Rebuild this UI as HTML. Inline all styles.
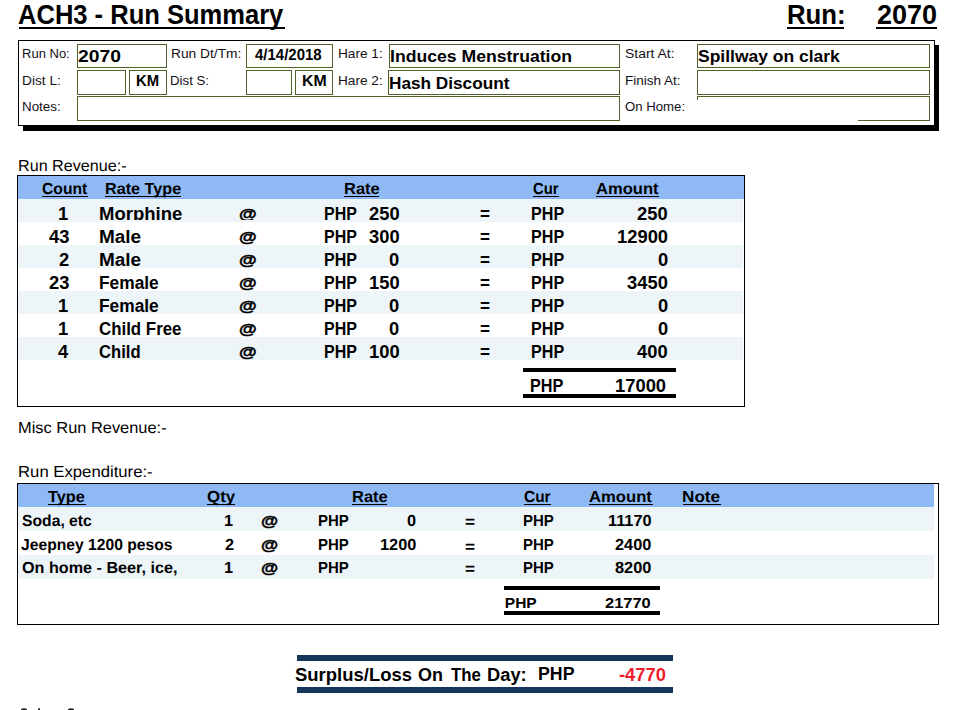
<!DOCTYPE html>
<html><head><meta charset="utf-8"><title>ACH3 - Run Summary</title><style>
html,body{margin:0;padding:0;background:#fff}
body{width:980px;height:710px;position:relative;overflow:hidden;font-family:"Liberation Sans",sans-serif}
.t{position:absolute;white-space:pre;line-height:30px;height:30px;transform-origin:0 0;color:#000;font-family:"Liberation Sans",sans-serif}
.b{font-weight:bold}
.bx{position:absolute;box-sizing:border-box;border:1px solid #4f6228;background:#fff}
.r{position:absolute;background:#000}
.row{position:absolute;left:0;width:980px;overflow:hidden}
</style></head><body>
<div class="r" style="left:23px;top:45px;width:916px;height:86px"></div>
<div style="position:absolute;left:18px;top:40px;width:917px;height:86px;box-sizing:border-box;border:1px solid #000;background:#fff"></div>
<div class="bx" style="left:77px;top:44px;width:90px;height:24px"></div>
<div class="bx" style="left:77px;top:70px;width:49px;height:25px"></div>
<div class="bx" style="left:129px;top:70px;width:38px;height:25px"></div>
<div class="bx" style="left:77px;top:96px;width:543px;height:25px"></div>
<div class="bx" style="left:246px;top:44px;width:87px;height:24px"></div>
<div class="bx" style="left:246px;top:70px;width:46px;height:25px"></div>
<div class="bx" style="left:295px;top:70px;width:38px;height:25px"></div>
<div class="bx" style="left:389px;top:44px;width:231px;height:24px"></div>
<div class="bx" style="left:388px;top:70px;width:232px;height:25px"></div>
<div class="bx" style="left:697px;top:44px;width:233px;height:24px"></div>
<div class="bx" style="left:697px;top:70px;width:233px;height:25px"></div>
<div class="r" style="left:697px;top:96px;width:233px;height:1px;background:#4f6228"></div>
<div class="r" style="left:929px;top:96px;width:1px;height:25px;background:#4f6228"></div>
<div class="r" style="left:858px;top:120px;width:72px;height:1px;background:#4f6228"></div>
<div class="r" style="left:697px;top:96px;width:1px;height:4px;background:#4f6228"></div>
<div class="r" style="left:19px;top:27px;width:266px;height:2px"></div>
<div class="r" style="left:787px;top:27px;width:57px;height:2px"></div>
<div class="r" style="left:876px;top:27px;width:61px;height:2px"></div>
<div style="position:absolute;left:17px;top:175px;width:728px;height:232px;box-sizing:border-box;border:1px solid #000;background:#fff"></div>
<div class="r" style="left:18px;top:176px;width:726px;height:23px;background:#8eb9f5"></div>
<div class="r" style="left:18px;top:199px;width:725px;height:23px;background:#edf5f9"></div>
<div class="r" style="left:18px;top:245px;width:725px;height:23px;background:#edf5f9"></div>
<div class="r" style="left:18px;top:291px;width:725px;height:23px;background:#edf5f9"></div>
<div class="r" style="left:18px;top:337px;width:725px;height:23px;background:#edf5f9"></div>
<div class="r" style="left:523px;top:368px;width:153px;height:4px"></div>
<div class="r" style="left:523px;top:394px;width:153px;height:4px"></div>
<div style="position:absolute;left:17px;top:483px;width:922px;height:142px;box-sizing:border-box;border:1px solid #000;background:#fff"></div>
<div class="r" style="left:18px;top:484px;width:916px;height:23px;background:#8eb9f5"></div>
<div class="r" style="left:18px;top:507px;width:916px;height:24px;background:#edf5f9"></div>
<div class="r" style="left:18px;top:555px;width:916px;height:24px;background:#edf5f9"></div>
<div class="r" style="left:504px;top:586px;width:156px;height:4px"></div>
<div class="r" style="left:504px;top:611px;width:156px;height:4px"></div>
<div class="r" style="left:297px;top:655px;width:376px;height:6px;background:#17365d"></div>
<div class="r" style="left:297px;top:687px;width:376px;height:6px;background:#17365d"></div>
<div class="r" style="left:41.9px;top:196px;width:46.1px;height:1px"></div>
<div class="r" style="left:104.8px;top:196px;width:76.4px;height:1px"></div>
<div class="r" style="left:343.8px;top:196px;width:35.6px;height:1px"></div>
<div class="r" style="left:532.5px;top:196px;width:26.2px;height:1px"></div>
<div class="r" style="left:596.3px;top:196px;width:63.2px;height:1px"></div>
<div class="r" style="left:47.5px;top:504px;width:38.2px;height:1px"></div>
<div class="r" style="left:207.0px;top:504px;width:28.4px;height:1px"></div>
<div class="r" style="left:351.8px;top:504px;width:35.6px;height:1px"></div>
<div class="r" style="left:524.3px;top:504px;width:27.2px;height:1px"></div>
<div class="r" style="left:589.3px;top:504px;width:63.4px;height:1px"></div>
<div class="r" style="left:682.5px;top:504px;width:38.2px;height:1px"></div>
<div class="r" style="left:21px;top:709px;width:6px;height:1px;background:#222"></div>
<div class="r" style="left:22px;top:708px;width:4px;height:1px;background:#777"></div>
<div class="r" style="left:38px;top:709px;width:2px;height:1px;background:#222"></div>
<div class="r" style="left:38px;top:708px;width:2px;height:1px;background:#777"></div>
<div class="r" style="left:68px;top:709px;width:6px;height:1px;background:#222"></div>
<div class="r" style="left:69px;top:708px;width:4px;height:1px;background:#777"></div>
<span class="t b" style="left:18.23px;top:0.00px;font-size:27.5px;transform:scaleX(0.9285);">ACH3 - Run Summary</span>
<span class="t b" style="left:786.92px;top:0.00px;font-size:27.5px;transform:scaleX(0.9353);">Run:</span>
<span class="t b" style="left:876.64px;top:0.00px;font-size:27.5px;transform:scaleX(0.9828);">2070</span>
<span class="t" style="left:21.80px;top:39.00px;font-size:12.5px;transform:scaleX(1.0409);color:#161016;">Run No:</span>
<span class="t" style="left:21.75px;top:66.00px;font-size:12.5px;transform:scaleX(1.0968);color:#161016;">Dist L:</span>
<span class="t" style="left:21.78px;top:92.00px;font-size:12.5px;transform:scaleX(1.0712);color:#161016;">Notes:</span>
<span class="t" style="left:170.50px;top:39.00px;font-size:12.5px;transform:scaleX(1.1014);color:#161016;">Run Dt/Tm:</span>
<span class="t" style="left:169.78px;top:66.00px;font-size:12.5px;transform:scaleX(1.0610);color:#161016;">Dist S:</span>
<span class="t" style="left:337.51px;top:39.00px;font-size:12.5px;transform:scaleX(1.0908);color:#161016;">Hare 1:</span>
<span class="t" style="left:337.51px;top:66.00px;font-size:12.5px;transform:scaleX(1.0908);color:#161016;">Hare 2:</span>
<span class="t" style="left:624.82px;top:39.00px;font-size:12.5px;transform:scaleX(1.1154);color:#161016;">Start At:</span>
<span class="t" style="left:624.77px;top:66.00px;font-size:12.5px;transform:scaleX(1.0807);color:#161016;">Finish At:</span>
<span class="t" style="left:625.08px;top:92.00px;font-size:12.5px;transform:scaleX(1.0546);color:#161016;">On Home:</span>
<span class="t b" style="left:78.29px;top:41.00px;font-size:16.5px;transform:scaleX(1.1677);">2070</span>
<span class="t b" style="left:389.75px;top:41.00px;font-size:16.5px;transform:scaleX(1.0675);">Induces Menstruation</span>
<span class="t b" style="left:389.03px;top:68.00px;font-size:16.5px;transform:scaleX(1.0425);">Hash Discount</span>
<span class="t b" style="left:697.99px;top:41.00px;font-size:16.5px;transform:scaleX(1.0593);">Spillway on clark</span>
<span class="t b" style="left:255.03px;top:40.00px;font-size:16px;transform:scaleX(0.9358) skewX(0.05deg);">4/14/2018</span>
<span class="t b" style="left:135.90px;top:66.00px;font-size:16px;transform:scaleX(0.9286) skewX(0.05deg);">KM</span>
<span class="t b" style="left:301.50px;top:66.00px;font-size:16px;transform:scaleX(0.9891) skewX(0.05deg);">KM</span>
<span class="t" style="left:18.27px;top:151.00px;font-size:16px;transform:scaleX(1.0084) skewX(0.05deg);">Run Revenue:-</span>
<span class="t" style="left:18.26px;top:413.00px;font-size:16px;transform:scaleX(1.0253) skewX(0.05deg);">Misc Run Revenue:-</span>
<span class="t" style="left:18.24px;top:457.00px;font-size:16px;transform:scaleX(1.0442) skewX(0.05deg);">Run Expenditure:-</span>
<span class="t b" style="left:41.93px;top:174.00px;font-size:16px;transform:scaleX(0.9809) skewX(0.05deg);">Count</span>
<span class="t b" style="left:104.58px;top:174.00px;font-size:16px;transform:scaleX(1.0113) skewX(0.05deg);">Rate Type</span>
<span class="t b" style="left:343.56px;top:174.00px;font-size:16px;transform:scaleX(1.0285) skewX(0.05deg);">Rate</span>
<span class="t b" style="left:532.62px;top:174.00px;font-size:16px;transform:scaleX(0.9287) skewX(0.05deg);">Cur</span>
<span class="t b" style="left:596.35px;top:174.00px;font-size:16px;transform:scaleX(1.0356) skewX(0.05deg);">Amount</span>
<span class="t b" style="left:529.88px;top:371.00px;font-size:18px;transform:scaleX(0.9018);">PHP</span>
<span class="t b" style="left:615.40px;top:371.00px;font-size:18px;transform:scaleX(1.0200);">17000</span>
<span class="t b" style="left:48.31px;top:482.00px;font-size:16px;transform:scaleX(1.0185) skewX(0.05deg);">Type</span>
<span class="t b" style="left:206.98px;top:482.00px;font-size:16px;transform:scaleX(1.0534) skewX(0.05deg);">Qty</span>
<span class="t b" style="left:351.56px;top:482.00px;font-size:16px;transform:scaleX(1.0285) skewX(0.05deg);">Rate</span>
<span class="t b" style="left:524.34px;top:482.00px;font-size:16px;transform:scaleX(0.9662) skewX(0.05deg);">Cur</span>
<span class="t b" style="left:589.35px;top:482.00px;font-size:16px;transform:scaleX(1.0398) skewX(0.05deg);">Amount</span>
<span class="t b" style="left:682.27px;top:482.00px;font-size:16px;transform:scaleX(1.0714) skewX(0.05deg);">Note</span>
<span class="t b" style="left:21.85px;top:506.00px;font-size:16px;transform:scaleX(0.9808) skewX(0.05deg);">Soda, etc</span>
<span class="t b" style="left:224.41px;top:506.00px;font-size:16px;transform:scaleX(1.0200) skewX(0.05deg);">1</span>
<span class="t b" style="left:261.41px;top:504.32px;font-size:14px;transform:scale(1.2538,1.1083);-webkit-text-stroke:0.45px #000;">@</span>
<span class="t b" style="left:317.89px;top:506.00px;font-size:16px;transform:scaleX(0.9362) skewX(0.05deg);">PHP</span>
<span class="t b" style="left:407.25px;top:506.00px;font-size:16px;transform:scaleX(1.0200) skewX(0.05deg);">0</span>
<span class="t b" style="left:464.77px;top:507.00px;font-size:16px;transform:scaleX(1.0770) skewX(0.05deg);">=</span>
<span class="t b" style="left:522.89px;top:506.00px;font-size:16px;transform:scaleX(0.9362) skewX(0.05deg);">PHP</span>
<span class="t b" style="left:607.76px;top:506.00px;font-size:16px;transform:scaleX(1.0200) skewX(0.05deg);">11170</span>
<span class="t b" style="left:21.41px;top:530.00px;font-size:16px;transform:scaleX(0.9790) skewX(0.05deg);">Jeepney 1200 pesos</span>
<span class="t b" style="left:225.37px;top:530.00px;font-size:16px;transform:scaleX(1.0200) skewX(0.05deg);">2</span>
<span class="t b" style="left:261.41px;top:528.32px;font-size:14px;transform:scale(1.2538,1.1083);-webkit-text-stroke:0.45px #000;">@</span>
<span class="t b" style="left:317.89px;top:530.00px;font-size:16px;transform:scaleX(0.9362) skewX(0.05deg);">PHP</span>
<span class="t b" style="left:379.90px;top:530.00px;font-size:16px;transform:scaleX(1.0200) skewX(0.05deg);">1200</span>
<span class="t b" style="left:464.77px;top:532.00px;font-size:16px;transform:scaleX(1.0770) skewX(0.05deg);">=</span>
<span class="t b" style="left:522.89px;top:530.00px;font-size:16px;transform:scaleX(0.9362) skewX(0.05deg);">PHP</span>
<span class="t b" style="left:614.90px;top:530.00px;font-size:16px;transform:scaleX(1.0200) skewX(0.05deg);">2400</span>
<span class="t b" style="left:21.81px;top:553.00px;font-size:16px;transform:scaleX(1.0103) skewX(0.05deg);">On home - Beer, ice,</span>
<span class="t b" style="left:224.41px;top:553.00px;font-size:16px;transform:scaleX(1.0200) skewX(0.05deg);">1</span>
<span class="t b" style="left:261.41px;top:551.32px;font-size:14px;transform:scale(1.2538,1.1083);-webkit-text-stroke:0.45px #000;">@</span>
<span class="t b" style="left:317.89px;top:553.00px;font-size:16px;transform:scaleX(0.9362) skewX(0.05deg);">PHP</span>
<span class="t b" style="left:464.77px;top:554.00px;font-size:16px;transform:scaleX(1.0770) skewX(0.05deg);">=</span>
<span class="t b" style="left:522.89px;top:553.00px;font-size:16px;transform:scaleX(0.9362) skewX(0.05deg);">PHP</span>
<span class="t b" style="left:614.90px;top:553.00px;font-size:16px;transform:scaleX(1.0200) skewX(0.05deg);">8200</span>
<span class="t b" style="left:504.84px;top:588.00px;font-size:15.5px;">PHP</span>
<span class="t b" style="left:605.16px;top:588.00px;font-size:15.5px;transform:scaleX(1.0600);">21770</span>
<span class="t b" style="left:295.46px;top:660.00px;font-size:18px;transform:scaleX(1.0262);">Surplus/Loss</span>
<span class="t b" style="left:418.01px;top:660.00px;font-size:18px;transform:scaleX(0.9949);">On</span>
<span class="t b" style="left:451.29px;top:660.00px;font-size:18px;transform:scaleX(0.9376);">The</span>
<span class="t b" style="left:486.52px;top:660.00px;font-size:18px;transform:scaleX(1.0164);">Day:</span>
<span class="t b" style="left:537.95px;top:659.00px;font-size:18px;transform:scaleX(0.9850);">PHP</span>
<span class="t b" style="left:619.27px;top:660.00px;font-size:18px;transform:scaleX(1.0191);color:#ee1c2e;">-4770</span>
<div class="row" style="top:199px;height:21px"><span class="t b" style="left:58.49px;top:0.00px;font-size:18px;transform:scaleX(1.0200);">1</span><span class="t b" style="left:99.01px;top:0.00px;font-size:18px;transform:scaleX(1.0288);">Morphine</span><span class="t b" style="left:239.27px;top:-2.02px;font-size:14px;transform:scale(1.2945,1.0917);-webkit-text-stroke:0.45px #000;">@</span><span class="t b" style="left:324.15px;top:0.00px;font-size:18px;transform:scaleX(0.8879);">PHP</span><span class="t b" style="left:368.95px;top:0.00px;font-size:18px;transform:scaleX(1.0200);">250</span><span class="t b" style="left:480.04px;top:0.00px;font-size:18px;transform:scaleX(0.9486);">=</span><span class="t b" style="left:531.14px;top:0.00px;font-size:18px;transform:scaleX(0.8949);">PHP</span><span class="t b" style="left:637.15px;top:0.00px;font-size:18px;transform:scaleX(1.0200);">250</span></div>
<div class="row" style="top:222px;height:23px"><span class="t b" style="left:48.90px;top:0.00px;font-size:18px;transform:scaleX(1.0200);">43</span><span class="t b" style="left:98.99px;top:0.00px;font-size:18px;transform:scaleX(1.0530);">Male</span><span class="t b" style="left:239.27px;top:-2.02px;font-size:14px;transform:scale(1.2945,1.0917);-webkit-text-stroke:0.45px #000;">@</span><span class="t b" style="left:324.15px;top:0.00px;font-size:18px;transform:scaleX(0.8879);">PHP</span><span class="t b" style="left:368.95px;top:0.00px;font-size:18px;transform:scaleX(1.0200);">300</span><span class="t b" style="left:480.04px;top:0.00px;font-size:18px;transform:scaleX(0.9486);">=</span><span class="t b" style="left:531.14px;top:0.00px;font-size:18px;transform:scaleX(0.8949);">PHP</span><span class="t b" style="left:616.75px;top:0.00px;font-size:18px;transform:scaleX(1.0200);">12900</span></div>
<div class="row" style="top:245px;height:23px"><span class="t b" style="left:59.12px;top:0.00px;font-size:18px;transform:scaleX(1.0200);">2</span><span class="t b" style="left:98.99px;top:0.00px;font-size:18px;transform:scaleX(1.0530);">Male</span><span class="t b" style="left:239.27px;top:-2.02px;font-size:14px;transform:scale(1.2945,1.0917);-webkit-text-stroke:0.45px #000;">@</span><span class="t b" style="left:324.15px;top:0.00px;font-size:18px;transform:scaleX(0.8879);">PHP</span><span class="t b" style="left:389.35px;top:0.00px;font-size:18px;transform:scaleX(1.0200);">0</span><span class="t b" style="left:480.04px;top:0.00px;font-size:18px;transform:scaleX(0.9486);">=</span><span class="t b" style="left:531.14px;top:0.00px;font-size:18px;transform:scaleX(0.8949);">PHP</span><span class="t b" style="left:657.55px;top:0.00px;font-size:18px;transform:scaleX(1.0200);">0</span></div>
<div class="row" style="top:268px;height:23px"><span class="t b" style="left:48.90px;top:0.00px;font-size:18px;transform:scaleX(1.0200);">23</span><span class="t b" style="left:99.07px;top:0.00px;font-size:18px;transform:scaleX(0.9634);">Female</span><span class="t b" style="left:239.27px;top:-2.02px;font-size:14px;transform:scale(1.2945,1.0917);-webkit-text-stroke:0.45px #000;">@</span><span class="t b" style="left:324.15px;top:0.00px;font-size:18px;transform:scaleX(0.8879);">PHP</span><span class="t b" style="left:368.95px;top:0.00px;font-size:18px;transform:scaleX(1.0200);">150</span><span class="t b" style="left:480.04px;top:0.00px;font-size:18px;transform:scaleX(0.9486);">=</span><span class="t b" style="left:531.14px;top:0.00px;font-size:18px;transform:scaleX(0.8949);">PHP</span><span class="t b" style="left:626.95px;top:0.00px;font-size:18px;transform:scaleX(1.0200);">3450</span></div>
<div class="row" style="top:291px;height:23px"><span class="t b" style="left:58.49px;top:0.00px;font-size:18px;transform:scaleX(1.0200);">1</span><span class="t b" style="left:99.07px;top:0.00px;font-size:18px;transform:scaleX(0.9634);">Female</span><span class="t b" style="left:239.27px;top:-2.02px;font-size:14px;transform:scale(1.2945,1.0917);-webkit-text-stroke:0.45px #000;">@</span><span class="t b" style="left:324.15px;top:0.00px;font-size:18px;transform:scaleX(0.8879);">PHP</span><span class="t b" style="left:389.35px;top:0.00px;font-size:18px;transform:scaleX(1.0200);">0</span><span class="t b" style="left:480.04px;top:0.00px;font-size:18px;transform:scaleX(0.9486);">=</span><span class="t b" style="left:531.14px;top:0.00px;font-size:18px;transform:scaleX(0.8949);">PHP</span><span class="t b" style="left:657.55px;top:0.00px;font-size:18px;transform:scaleX(1.0200);">0</span></div>
<div class="row" style="top:314px;height:23px"><span class="t b" style="left:58.49px;top:0.00px;font-size:18px;transform:scaleX(1.0200);">1</span><span class="t b" style="left:99.30px;top:0.00px;font-size:18px;transform:scaleX(0.9374);">Child Free</span><span class="t b" style="left:239.27px;top:-2.02px;font-size:14px;transform:scale(1.2945,1.0917);-webkit-text-stroke:0.45px #000;">@</span><span class="t b" style="left:324.15px;top:0.00px;font-size:18px;transform:scaleX(0.8879);">PHP</span><span class="t b" style="left:389.35px;top:0.00px;font-size:18px;transform:scaleX(1.0200);">0</span><span class="t b" style="left:480.04px;top:0.00px;font-size:18px;transform:scaleX(0.9486);">=</span><span class="t b" style="left:531.14px;top:0.00px;font-size:18px;transform:scaleX(0.8949);">PHP</span><span class="t b" style="left:657.55px;top:0.00px;font-size:18px;transform:scaleX(1.0200);">0</span></div>
<div class="row" style="top:337px;height:23px"><span class="t b" style="left:58.36px;top:0.00px;font-size:18px;transform:scaleX(1.0200);">4</span><span class="t b" style="left:99.31px;top:0.00px;font-size:18px;transform:scaleX(0.9232);">Child</span><span class="t b" style="left:239.27px;top:-2.02px;font-size:14px;transform:scale(1.2945,1.0917);-webkit-text-stroke:0.45px #000;">@</span><span class="t b" style="left:324.15px;top:0.00px;font-size:18px;transform:scaleX(0.8879);">PHP</span><span class="t b" style="left:368.95px;top:0.00px;font-size:18px;transform:scaleX(1.0200);">100</span><span class="t b" style="left:480.04px;top:0.00px;font-size:18px;transform:scaleX(0.9486);">=</span><span class="t b" style="left:531.14px;top:0.00px;font-size:18px;transform:scaleX(0.8949);">PHP</span><span class="t b" style="left:637.15px;top:0.00px;font-size:18px;transform:scaleX(1.0200);">400</span></div>
</body></html>
